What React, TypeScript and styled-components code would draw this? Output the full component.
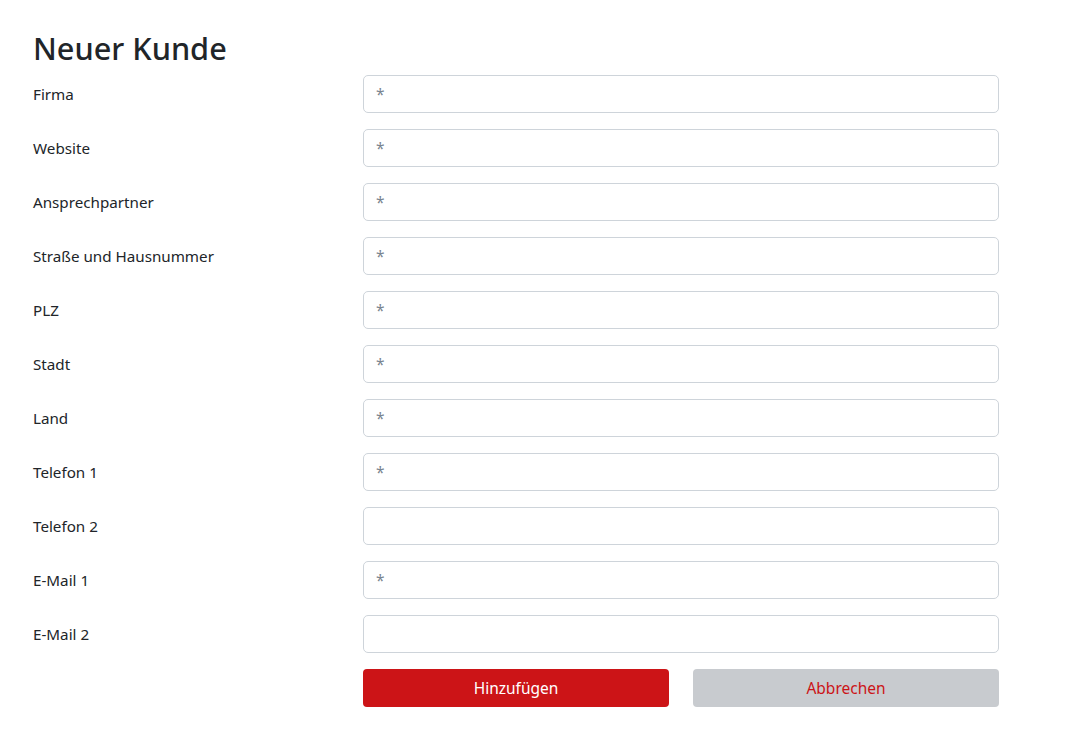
import React from "react";
import styled, { createGlobalStyle } from "styled-components";

const Global = createGlobalStyle`
  * { box-sizing: border-box; }
  body {
    margin: 0;
    background: #ffffff;
    font-family: "Noto Sans", "Open Sans", "DejaVu Sans", sans-serif;
    color: #212529;
  }
`;

const Page = styled.div`
  padding: 29px 0 0 33px;
  width: 999px;
`;

const Title = styled.h2`
  margin: 0 0 8px 0;
  font-size: 30.7px;
  font-weight: 500;
  line-height: 38px;
  color: #212529;
`;

const Form = styled.form`
  display: grid;
  grid-template-columns: 330px 636px;
  row-gap: 16px;
  align-items: center;
`;

const Label = styled.label`
  font-size: 15.2px;
  line-height: 24px;
  color: #212529;
`;

const Input = styled.input`
  height: 38px;
  width: 100%;
  padding: 6px 12px;
  border: 1px solid #ced4da;
  border-radius: 5px;
  font-family: inherit;
  font-size: 15.5px;
  color: #495057;
  background: #fff;
  &::placeholder { color: #7a8590; }
`;

const Buttons = styled.div`
  grid-column: 2;
  display: grid;
  grid-template-columns: 1fr 1fr;
  column-gap: 24px;
`;

const Button = styled.button<{ $variant: "primary" | "secondary" }>`
  height: 38px;
  border: none;
  border-radius: 4px;
  font-family: inherit;
  font-size: 15.5px;
  background: ${(p) => (p.$variant === "primary" ? "#cc1417" : "#c8cbcf")};
  color: ${(p) => (p.$variant === "primary" ? "#ffffff" : "#cc1417")};
  cursor: pointer;
`;

const fields: { label: string; required: boolean }[] = [
  { label: "Firma", required: true },
  { label: "Website", required: true },
  { label: "Ansprechpartner", required: true },
  { label: "Straße und Hausnummer", required: true },
  { label: "PLZ", required: true },
  { label: "Stadt", required: true },
  { label: "Land", required: true },
  { label: "Telefon 1", required: true },
  { label: "Telefon 2", required: false },
  { label: "E-Mail 1", required: true },
  { label: "E-Mail 2", required: false },
];

export default function App() {
  return (
    <>
      <Global />
      <Page>
        <Title>Neuer Kunde</Title>
        <Form onSubmit={(e) => e.preventDefault()}>
          {fields.map((f) => (
            <React.Fragment key={f.label}>
              <Label>{f.label}</Label>
              <Input placeholder={f.required ? "*" : ""} />
            </React.Fragment>
          ))}
          <Buttons>
            <Button type="submit" $variant="primary">Hinzufügen</Button>
            <Button type="button" $variant="secondary">Abbrechen</Button>
          </Buttons>
        </Form>
      </Page>
    </>
  );
}
